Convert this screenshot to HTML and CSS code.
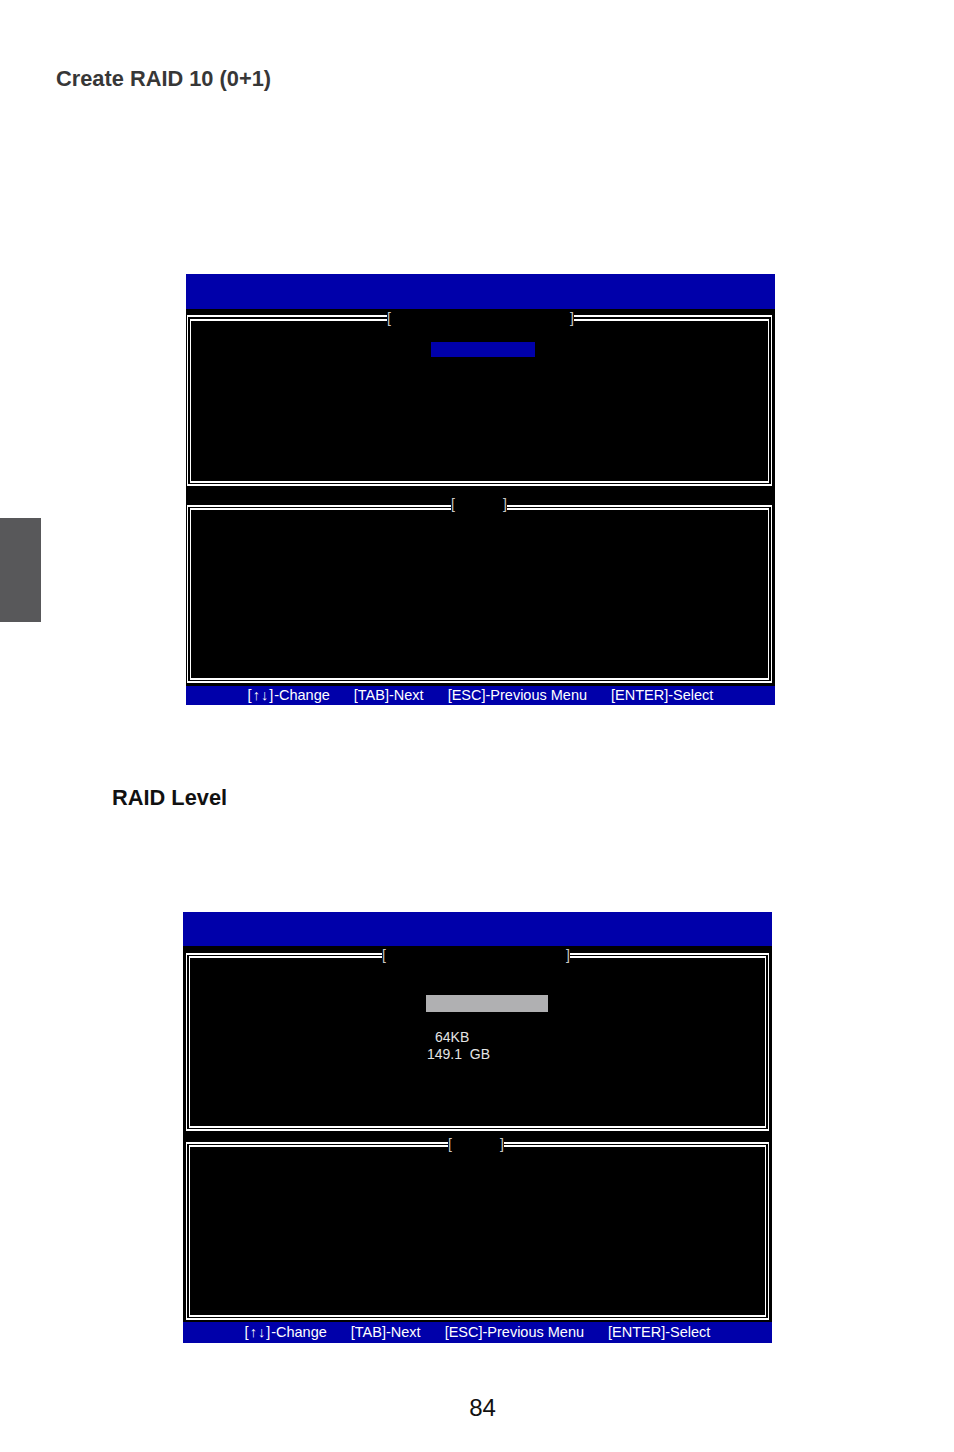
FILE: index.html
```html
<!DOCTYPE html>
<html>
<head>
<meta charset="utf-8">
<link rel="stylesheet" href="styles.css">
</head>
<body>
<div class="page">
  <h1 class="title">Create RAID 10 (0+1)</h1>

  <div class="row">
    <div class="thumb"></div>
    <div class="screen s1">
      <div class="hdr"></div>
      <div class="panel p-top">
        <span class="label l-wide"><span>[</span><span>]</span></span>
        <div class="sel-blue"></div>
      </div>
      <div class="panel p-bot">
        <span class="label l-narrow"><span>[</span><span>]</span></span>
      </div>
      <div class="footer">
        <span><span class="arr">[↑↓]</span>-Change</span>
        <span>[TAB]-Next</span>
        <span>[ESC]-Previous Menu</span>
        <span>[ENTER]-Select</span>
      </div>
    </div>
  </div>

  <h2 class="subtitle">RAID Level</h2>

  <div class="screen s2">
    <div class="hdr"></div>
    <div class="panel p-top">
      <span class="label l-wide"><span>[</span><span>]</span></span>
      <div class="sel-grey"></div>
      <div class="val v1">64KB</div>
      <div class="val v2">149.1  GB</div>
    </div>
    <div class="panel p-bot">
      <span class="label l-narrow"><span>[</span><span>]</span></span>
    </div>
    <div class="footer">
      <span><span class="arr">[↑↓]</span>-Change</span>
      <span>[TAB]-Next</span>
      <span>[ESC]-Previous Menu</span>
      <span>[ENTER]-Select</span>
    </div>
  </div>

  <div class="pagenum">84</div>
</div>
</body>
</html>
```

FILE: styles.css
```css
* { box-sizing: border-box; }
html, body { margin: 0; padding: 0; background: #fff; }
body { font-family: "Liberation Sans", Arial, sans-serif; }

.page {
  width: 954px;
  height: 1452px;
  padding-top: 66px;
}

.title {
  margin: 0 0 0 56px;
  font-size: 21.8px;
  line-height: 25px;
  font-weight: bold;
  color: #373737;
}

.row {
  display: flex;
  align-items: flex-start;
  margin-top: 183px;
}

.thumb {
  width: 41px;
  height: 104px;
  margin-top: 244px;
  background: #58585a;
}

.screen {
  width: 589px;
  background: #000;
  display: flex;
  flex-direction: column;
}

.s1 { margin-left: 145px; }
.s2 { margin-left: 183px; margin-top: 102px; }

.hdr { background: #0000aa; }
.s1 .hdr { height: 35px; }
.s2 .hdr { height: 34px; }

.panel {
  position: relative;
  border-style: double;
  border-color: #fff;
  border-width: 6px 4px 5px 4px;
}

.s1 .panel { margin-left: 1px; margin-right: 3px; }
.s2 .panel { margin-left: 3px; margin-right: 3px; border-width: 5px 4px 5px 4px; }

.s1 .p-top { margin-top: 6px; height: 171px; }
.s1 .p-bot { margin-top: 19px; height: 178px; border-width: 5px 4px 5px 4px; }
.s2 .p-top { margin-top: 7px; height: 178px; }
.s2 .p-bot { margin-top: 11px; height: 178px; }

.label {
  position: absolute;
  top: -10px;
  height: 14px;
  display: flex;
  justify-content: space-between;
  background: #000;
  color: #c8c8c8;
  font-size: 14px;
  line-height: 14px;
}

.s1 .l-wide { left: 196px; width: 187px; }
.s2 .l-wide { left: 192px; width: 188px; }
.s1 .l-narrow { left: 260px; width: 56px; top: -13px; }
.s2 .l-narrow { left: 258px; width: 56px; top: -10px; }

.sel-blue {
  margin: 21px 0 0 240px;
  width: 104px;
  height: 15px;
  background: #0000aa;
}

.sel-grey {
  margin: 37px 0 0 236px;
  width: 122px;
  height: 17px;
  background: #b0b0b2;
}

.val {
  color: #e4e4e4;
  font-size: 14px;
  line-height: 17px;
  white-space: pre;
}
.v1 { margin: 17px 0 0 245px; }
.v2 { margin: 0 0 0 237px; }

.footer {
  background: #0000aa;
  display: flex;
  justify-content: center;
  gap: 24px;
  color: #fff;
  font-size: 14.5px;
}
.arr { letter-spacing: 1px; }
.s1 .footer { margin-top: 3px; height: 19px; line-height: 18px; }
.s2 .footer { margin-top: 2px; height: 21px; line-height: 20px; }

.subtitle {
  margin: 80px 0 0 112px;
  font-size: 21.8px;
  line-height: 25px;
  font-weight: bold;
  color: #111;
}

.pagenum {
  margin-top: 51px;
  padding-left: 11px;
  text-align: center;
  font-size: 24px;
  line-height: 28px;
  color: #111;
}
```
